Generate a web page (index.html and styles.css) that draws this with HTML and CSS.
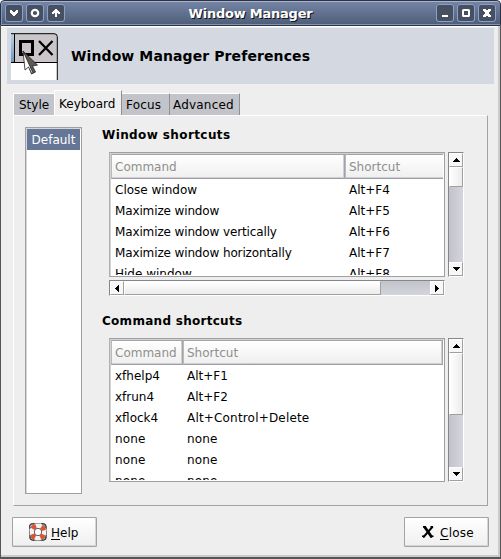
FILE: index.html
```html
<!DOCTYPE html>
<html lang="en">
<head>
<meta charset="utf-8">
<title>Window Manager</title>
<link rel="stylesheet" href="styles.css">
</head>
<body>
<div class="window">
  <div class="titlebar">
    <div class="controls">
      <span class="ctl"><svg width="18" height="18" shape-rendering="crispEdges"><path fill="#fff" d="M5 6h2v1h1v1h2v-1h1v-1h2v3h-1v1h-1v1h-1v1h-2v-1h-1v-1h-1v-1h-1z"/></svg></span>
      <span class="ctl"><svg width="18" height="18"><circle cx="9" cy="9" r="3.200" fill="none" stroke="#fff" stroke-width="2.200"/></svg></span>
      <span class="ctl"><svg width="18" height="18" shape-rendering="crispEdges"><path fill="#fff" d="M8 5h2v1h1v1h1v1h1v2h-2v-1h-1v4h-2v-4h-1v1h-2v-2h1v-1h1v-1h1z"/></svg></span>
    </div>
    <div class="caption">Window Manager</div>
    <div class="controls">
      <span class="ctl"><svg width="18" height="18" shape-rendering="crispEdges"><path fill="#fff" d="M6 11h6v2h-6z"/></svg></span>
      <span class="ctl"><svg width="18" height="18"><rect x="6" y="6" width="6" height="6" rx=".5" fill="none" stroke="#fff" stroke-width="2"/></svg></span>
      <span class="ctl"><svg width="18" height="18" shape-rendering="crispEdges"><path fill="#fff" d="M5 5h3v1h2v-1h3v2h-1v1h-1v2h1v1h1v2h-3v-1h-2v1h-3v-2h1v-1h1v-2h-1v-1h-1z"/></svg></span>
    </div>
  </div>
  <div class="client">
    <div class="banner">
      <svg class="logo" width="48" height="48" viewBox="0 0 48 48">
        <defs><linearGradient id="sky" x1="0" y1="0" x2="0" y2="1"><stop offset="0" stop-color="#b9d3ea"/><stop offset="1" stop-color="#7294b8"/></linearGradient></defs>
        <path fill="#fff" d="M0 29h47v18h-47z"/>
        <path fill="url(#sky)" d="M0 1h3v28h-3z"/>
        <path fill="#c9c5c8" d="M4 1h40q2 0 2 2v26h-42z"/>
        <path fill="none" stroke="#000" d="M0 .7h43q3.300 0 3.300 3v43.300M0 29.500h46M3.500 1v28"/>
        <path fill="none" stroke="#000" stroke-width="3" d="M9.500 8.500h12v13h-12z"/>
        <path fill="none" stroke="#000" stroke-width="2.300" d="M28 8l13.500 14M41.500 8l-13.500 14"/>
        <path fill="#5f5751" stroke="#222" stroke-width=".8" d="M12 18l14.500 14-5 1 3 6-4 2z"/>
        <path fill="#fff" stroke="#222" stroke-width=".8" d="M12 18l2 19 3.500-3 3.500 7 1-1z"/>
      </svg>
      <h1>Window Manager Preferences</h1>
    </div>
    <div class="tabs">
      <div class="tab t-style">Style</div>
      <div class="tab active">Keyboard</div>
      <div class="tab t-focus">Focus</div>
      <div class="tab t-adv">Advanced</div>
    </div>
    <div class="panel">
      <div class="list"><div class="selected">Default</div></div>
      <div class="content">
        <h2>Window shortcuts</h2>
        <div class="scroller first">
          <div class="table wide">
            <div class="row head"><span>Command</span><span>Shortcut</span></div>
            <div class="row"><span>Close window</span><span>Alt+F4</span></div>
            <div class="row"><span class="tight">Maximize window</span><span>Alt+F5</span></div>
            <div class="row"><span class="tight">Maximize window vertically</span><span>Alt+F6</span></div>
            <div class="row"><span class="tight">Maximize window horizontally</span><span>Alt+F7</span></div>
            <div class="row"><span>Hide window</span><span>Alt+F8</span></div>
          </div>
          <div class="vbar">
            <i class="arrow"><svg width="7" height="4" shape-rendering="crispEdges"><path d="M3 0h1v1h1v1h1v1h1v1h-7v-1h1v-1h1v-1h1z"/></svg></i>
            <i class="thumb short"></i><b></b>
            <i class="arrow"><svg width="7" height="4" shape-rendering="crispEdges"><path d="M0 0h7v1h-1v1h-1v1h-1v1h-1v-1h-1v-1h-1v-1h-1z"/></svg></i>
          </div>
        </div>
        <div class="hbar">
          <i class="arrow"><svg width="4" height="7" shape-rendering="crispEdges"><path d="M3 0h1v7h-1v-1h-1v-1h-1v-1h-1v-1h1v-1h1v-1h1z"/></svg></i>
          <i class="thumb"></i><b></b>
          <i class="arrow"><svg width="4" height="7" shape-rendering="crispEdges"><path d="M0 0h1v1h1v1h1v1h1v1h-1v1h-1v1h-1v1h-1z"/></svg></i>
        </div>
        <h2 class="second-title">Command shortcuts</h2>
        <div class="scroller second">
          <div class="table narrow">
            <div class="row head"><span>Command</span><span>Shortcut</span></div>
            <div class="row"><span>xfhelp4</span><span>Alt+F1</span></div>
            <div class="row"><span>xfrun4</span><span>Alt+F2</span></div>
            <div class="row"><span>xflock4</span><span class="loose">Alt+Control+Delete</span></div>
            <div class="row"><span class="loose">none</span><span class="loose">none</span></div>
            <div class="row"><span class="loose">none</span><span class="loose">none</span></div>
            <div class="row"><span class="loose">none</span><span class="loose">none</span></div>
          </div>
          <div class="vbar">
            <i class="arrow"><svg width="7" height="4" shape-rendering="crispEdges"><path d="M3 0h1v1h1v1h1v1h1v1h-7v-1h1v-1h1v-1h1z"/></svg></i>
            <i class="thumb tall"></i><b></b>
            <i class="arrow"><svg width="7" height="4" shape-rendering="crispEdges"><path d="M0 0h7v1h-1v1h-1v1h-1v1h-1v-1h-1v-1h-1v-1h-1z"/></svg></i>
          </div>
        </div>
      </div>
    </div>
    <div class="actions">
      <div class="button help">
        <svg width="20" height="20" viewBox="0 0 20 20">
          <path fill="none" stroke="#444" stroke-width="1.500" d="M2 7q-2-6 5-5M13 2q6-1 5 5M18 13q1 6-5 5M7 18q-6 1-5-5"/>
          <circle cx="10" cy="10" r="6.300" fill="none" stroke="#555" stroke-width="5.600"/>
          <circle cx="10" cy="10" r="6.200" fill="none" stroke="#f4f4f2" stroke-width="4.400"/>
          <circle cx="10" cy="10" r="6.200" fill="none" stroke="#e4512b" stroke-width="4.400" stroke-dasharray="4.200 5.540" stroke-dashoffset="-2.770"/>
          <circle cx="10" cy="10" r="3.700" fill="#fff" stroke="#555" stroke-width=".9"/>
        </svg>
        <span><u>H</u>elp</span>
      </div>
      <div class="button close">
        <svg width="12" height="12" viewBox="0 0 12 12"><path fill="none" stroke="#000" stroke-width="2.800" d="M2 0L10 11.500"/><path fill="none" stroke="#000" stroke-width="2" d="M10.700 .5L1.200 11.500"/><path d="M1 0h3v1.500h-3zM8.500 0h2.500v1.500h-2.500zM0 9.500h3v1.500h-3zM8.500 9.500h3v1.500h-3z"/></svg>
        <span><u>C</u>lose</span>
      </div>
    </div>
  </div>
</div>
</body>
</html>
```
FILE: styles.css
```css
* { box-sizing: border-box; }
body {
  margin: 0;
  background: #fff;
  font: 12px/21px "DejaVu Sans", sans-serif;
  color: #000;
}
.window {
  width: 501px;
  height: 559px;
  display: flex;
  flex-direction: column;
  background: #eee;
  border-radius: 4px 4px 0 0;
  overflow: hidden;
}
.titlebar {
  height: 26px;
  flex: none;
  display: flex;
  justify-content: space-between;
  padding: 2px 4px 0;
  border: 1px solid #2b3342;
  border-radius: 4px 4px 0 0;
  background: linear-gradient(#7585a7, #4e5d77);
  box-shadow: inset 0 1px #a9b3cb, inset 0 -1px #8294b8, inset 1px 0 #8294b8;
}
.controls { display: flex; gap: 3px; margin-top: 1px; }
.ctl {
  width: 18px;
  height: 18px;
  border-radius: 3px;
  background: #465061;
  box-shadow: inset 0 0 0 1px #8aa0c8;
}
.ctl svg { display: block; }
.caption {
  font-weight: bold;
  font-size: 13px;
  letter-spacing: -.23px;
  line-height: 21px;
  color: #fff;
  text-shadow: 1px 1px #111;
}
.client {
  flex: 1;
  padding: 2px 3px 0 6px;
  border: solid #555;
  border-width: 0 1px 2px 1px;
  box-shadow: inset -2px -2px #cbcbcb, inset 0 1px #fff;
}
.banner {
  height: 56px;
  width: 487px;
  display: flex;
  align-items: center;
  background: #d4d8e1;
  padding-left: 4px;
}
.logo { margin-top: 1px; }
h1 { margin: 0 0 0 12px; font-size: 14px; line-height: 20px; letter-spacing: .1px; }
.tabs { display: flex; align-items: flex-end; height: 31px; padding-left: 6px; }
.tab {
  height: 22px;
  line-height: 22px;
  padding-left: 4px;
  background: #c3c4ca;
  border-top: 1px solid #fff;
  border-right: 1px solid #8f8f98;
}
.t-style { width: 41px; padding-left: 5px; border-left: 1px solid #fff; border-right: 0; }
.active { width: 68px; height: 25px; line-height: 26px; background: #eee; border-left: 1px solid #fff; }
.t-focus { width: 48px; letter-spacing: .2px; }
.t-adv { width: 70px; padding-left: 3px; letter-spacing: .2px; }
.panel {
  width: 475px;
  height: 391px;
  margin-left: 6px;
  display: flex;
  border: 1px solid #a3a3a3;
  border-top-color: #fff;
  border-left-color: #fff;
  padding: 11px 0 0 11px;
}
.list {
  width: 57px;
  height: 367px;
  padding: 1px;
  border: 1px solid #a0a0a2;
  box-shadow: inset 1px 1px #d6d6d8;
  background: #fff;
}
.selected { height: 21px; line-height: 22px; background: #667697; color: #fff; text-align: center; }
.content { margin-left: 20px; width: 362px; }
h2 { margin: -3px 0 0; font-size: 12px; line-height: 22px; height: 20px; letter-spacing: .4px; }
.scroller { display: flex; gap: 3px; margin: 8px 0 0 7px; }
.first { height: 125px; }
.second { height: 144px; margin-top: 7px; }
.table {
  width: 336px;
  height: 100%;
  overflow: clip;
  overflow-clip-margin: content-box;
  background: #fff;
  border: 1px solid #a0a0a2;
  border-left-color: #b0b0b3;
  box-shadow: inset 1px 1px #d2d2d5;
  padding: 1px;
}
.row { display: flex; height: 21px; line-height: 23px; white-space: nowrap; }
.row span { padding-left: 4px; }
.tight { letter-spacing: -.13px; }
.loose { letter-spacing: .18px; }
.wide span:first-child { width: 234px; }
.narrow span:first-child { width: 72px; }
.head { height: 25px; color: #8f8f8c; line-height: 24px; }
.head span {
  background: linear-gradient(#fff, #efefef);
  border: 1px solid #a3a3a8;
  border-bottom: 1px solid #9d9da3;
  border-left-color: #b9b9be;
  box-shadow: inset -1px -1px #cfcfd4;
  padding-left: 3px !important;
}
.head span:last-child { flex: 1; }
.wide .head span:last-child { border-right: 0; box-shadow: inset 0 -1px #cfcfd4; }
.vbar, .hbar { display: flex; }
.vbar {
  flex-direction: column;
  width: 16px;
  background: linear-gradient(90deg, #c3c4cb, #d4d5dc);
  border: 1px solid #85858c;
  border-right-color: #fff;
  border-bottom-color: #fff;
}
.hbar {
  width: 336px;
  height: 16px;
  margin: 3px 0 0 7px;
  background: linear-gradient(#c3c4cb, #d4d5dc);
  border: 1px solid #85858c;
  border-right-color: #fff;
  border-bottom-color: #fff;
}
.arrow, .thumb {
  flex: none;
  background: #f7f7f7;
  border: 1px solid #fff;
  border-right-color: #a0a0a0;
  border-bottom-color: #a0a0a0;
}
.arrow { width: 14px; height: 14px; display: flex; align-items: center; justify-content: center; }
.vbar b, .hbar b { flex: 1; }
.vbar .thumb { background: linear-gradient(90deg, #fff, #ececec); }
.short { height: 20px; }
.tall { height: 62px; }
.hbar .thumb { width: 257px; background: linear-gradient(#fff, #ececec); }
.second-title { margin-top: 15px; line-height: 21px; letter-spacing: .28px; }
.actions { display: flex; justify-content: space-between; width: 477px; margin: 11px 0 0 5px; }
.button {
  width: 85px;
  height: 30px;
  display: flex;
  align-items: center;
  background: linear-gradient(#fff, #efefef);
  border: 1px solid #a3a3a3;
  border-radius: 1px;
  box-shadow: inset -1px -1px #d6d6d6;
}
.help { padding-left: 15px; gap: 3px; }
.close { padding-left: 17px; gap: 6px; letter-spacing: .25px; }
.button span { padding-top: 2px; }
u { text-underline-offset: 2px; text-decoration-thickness: 1px; }
```
